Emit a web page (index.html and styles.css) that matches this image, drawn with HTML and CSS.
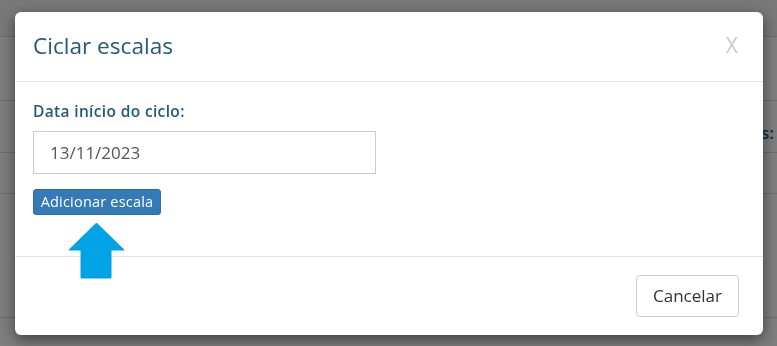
FILE: index.html
```html
<!DOCTYPE html>
<html lang="pt-BR">
<head>
<meta charset="utf-8">
<title>Ciclar escalas</title>
<link rel="stylesheet" href="styles.css">
</head>
<body>
<div class="page">
  <div class="row r1"></div>
  <div class="row r2"></div>
  <div class="row r3"><span class="bg-text">Escalas:</span></div>
  <div class="row r4"></div>
  <div class="row r5"></div>
  <div class="row r6"></div>
</div>
<div class="backdrop"></div>
<div class="modal">
  <div class="modal-header">
    <h4 class="modal-title">Ciclar escalas</h4>
    <span class="close">X</span>
  </div>
  <div class="modal-body">
    <label class="field-label">Data início do ciclo:</label>
    <div class="input">13/11/2023</div>
    <button class="btn-primary">Adicionar escala</button>
  </div>
  <div class="modal-footer">
    <button class="btn-default">Cancelar</button>
  </div>
  <svg class="arrow" width="56" height="56" viewBox="0 0 56 56">
    <polygon points="27.5,0 55,27 42,27 42,55 12,55 12,27 0,27" fill="#00a4e6" stroke="#00a4e6" stroke-width="1" stroke-linejoin="round"/>
  </svg>
</div>
</body>
</html>
```
FILE: styles.css
```css
html, body {
  margin: 0;
  padding: 0;
  width: 777px;
  height: 346px;
  overflow: hidden;
  font-family: "Open Sans", "Noto Sans", sans-serif;
}
.page {
  width: 777px;
  height: 346px;
  background: #fff;
  display: flex;
  flex-direction: column;
}
.row {
  border-bottom: 1px solid #d9d9d9;
  box-sizing: border-box;
  position: relative;
}
.r1 { height: 37px; background: #f2f2f2; }
.r2 { height: 64px; }
.r3 { height: 52px; display: flex; align-items: center; justify-content: flex-end; }
.r4 { height: 41px; }
.r5 { height: 124px; }
.r6 { flex: 1; border-bottom: none; }
.bg-text {
  font-size: 17px;
  font-weight: 600;
  color: #1f5a7a;
  margin-right: 3px;
  margin-top: 12px;
  white-space: nowrap;
}
.backdrop {
  position: fixed;
  inset: 0;
  background: rgba(0, 0, 0, 0.5);
}
.modal {
  position: absolute;
  left: 15px;
  top: 12px;
  width: 748px;
  height: 323px;
  background: #fff;
  border-radius: 6px;
  box-shadow: 0 5px 15px rgba(0, 0, 0, 0.5);
  display: flex;
  flex-direction: column;
  box-sizing: border-box;
}
.modal-header {
  height: 69px;
  border-bottom: 1px solid #e5e5e5;
  display: flex;
  align-items: center;
  justify-content: space-between;
  padding: 0 25px 0 18px;
}
.modal-title {
  margin: 0;
  font-size: 22.6px;
  font-weight: 400;
  color: #25597a;
  padding-bottom: 2px;
}
.close {
  font-size: 21px;
  color: #c9c9c9;
  font-weight: 400;
  padding-bottom: 3px;
}
.modal-body {
  height: 175px;
  border-bottom: 1px solid #e5e5e5;
  padding: 19px 18px 0 18px;
  box-sizing: border-box;
  display: flex;
  flex-direction: column;
  align-items: flex-start;
}
.field-label {
  font-size: 15.5px;
  font-weight: 600;
  color: #25597a;
  line-height: 20px;
  letter-spacing: 0.35px;
  margin-bottom: 10px;
}
.input {
  width: 343px;
  height: 43px;
  box-sizing: border-box;
  border: 1px solid #cccccc;
  font-size: 17px;
  color: #555;
  padding: 0 16px;
  display: flex;
  align-items: center;
  font-family: "Open Sans", "Noto Sans", sans-serif;
}
.btn-primary {
  margin-top: 15px;
  background: #337ab7;
  border: 1px solid #2e6da4;
  color: #fff;
  font-family: "Open Sans", "Noto Sans", sans-serif;
  font-size: 14.5px;
  line-height: 18px;
  letter-spacing: 0.2px;
  padding: 3px 0;
  border-radius: 3px;
  width: 128px;
  box-sizing: border-box;
  text-align: center;
}
.modal-footer {
  flex: 1;
  display: flex;
  justify-content: flex-end;
  align-items: center;
  padding: 0 24px 1px 0;
}
.btn-default {
  background: #fff;
  border: 1px solid #cccccc;
  border-radius: 4px;
  color: #333;
  font-family: "Open Sans", "Noto Sans", sans-serif;
  font-size: 17px;
  width: 103px;
  height: 42px;
  padding: 0;
}
.arrow {
  position: absolute;
  left: 54px;
  top: 211px;
}
```
